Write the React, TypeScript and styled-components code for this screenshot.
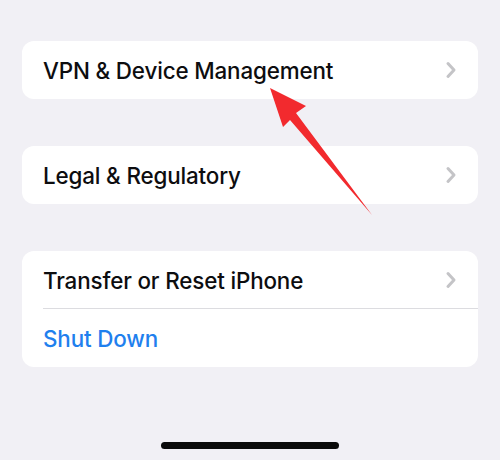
import React from "react";
import styled, { createGlobalStyle } from "styled-components";

const Global = createGlobalStyle`
  html, body { margin: 0; padding: 0; background: #f1f0f5; }
  body { font-family: Inter, "Noto Sans", "Liberation Sans", sans-serif; }
`;

const Screen = styled.div`
  position: relative;
  width: 500px;
  height: 460px;
  background: #f1f0f5;
  padding-top: 41px;
  box-sizing: border-box;
  display: flex;
  flex-direction: column;
  align-items: center;
  overflow: hidden;
`;

const Groups = styled.div`
  width: 456px;
  display: flex;
  flex-direction: column;
  gap: 47px;
`;

const Card = styled.div`
  background: #ffffff;
  border-radius: 12px;
  overflow: hidden;
`;

const Row = styled.div<{ $divider?: boolean }>`
  height: 58px;
  display: flex;
  align-items: center;
  justify-content: space-between;
  padding: 0 20px 0 21px;
  box-sizing: border-box;
  position: relative;
  ${(p) =>
    p.$divider
      ? `&::after { content: ""; position: absolute; left: 21px; right: 0; bottom: 0; height: 1px; background: #dcdce0; }`
      : ""}
`;

const Label = styled.span<{ $blue?: boolean }>`
  font-size: 22.4px;
  font-weight: 500;
  letter-spacing: -0.15px;
  color: ${(p) => (p.$blue ? "#1f80ee" : "#0d0d0f")};
`;

const Chevron = () => (
  <svg width="14" height="18" viewBox="0 0 14 18">
    <path d="M4 2.5 L10 9 L4 15.5" fill="none" stroke="#c4c4c7" strokeWidth="3" strokeLinecap="round" strokeLinejoin="round" />
  </svg>
);

const HomeBar = styled.div`
  position: absolute;
  left: 161px;
  top: 442px;
  width: 178px;
  height: 7px;
  border-radius: 4px;
  background: #0a0a0a;
`;

const ArrowLayer = styled.svg`
  position: absolute;
  left: 0;
  top: 0;
  pointer-events: none;
`;

export default function App() {
  return (
    <>
      <Global />
      <Screen>
        <Groups>
          <Card>
            <Row>
              <Label>VPN &amp; Device Management</Label>
              <Chevron />
            </Row>
          </Card>
          <Card>
            <Row>
              <Label>Legal &amp; Regulatory</Label>
              <Chevron />
            </Row>
          </Card>
          <Card>
            <Row $divider>
              <Label>Transfer or Reset iPhone</Label>
              <Chevron />
            </Row>
            <Row>
              <Label $blue>Shut Down</Label>
            </Row>
          </Card>
        </Groups>
        <HomeBar />
        <ArrowLayer width="500" height="460" viewBox="0 0 500 460">
          <path d="M270 88 L306 106 L296 113 L372 215 L290 120 L283 127 Z" fill="#f22a2e" />
        </ArrowLayer>
      </Screen>
    </>
  );
}
